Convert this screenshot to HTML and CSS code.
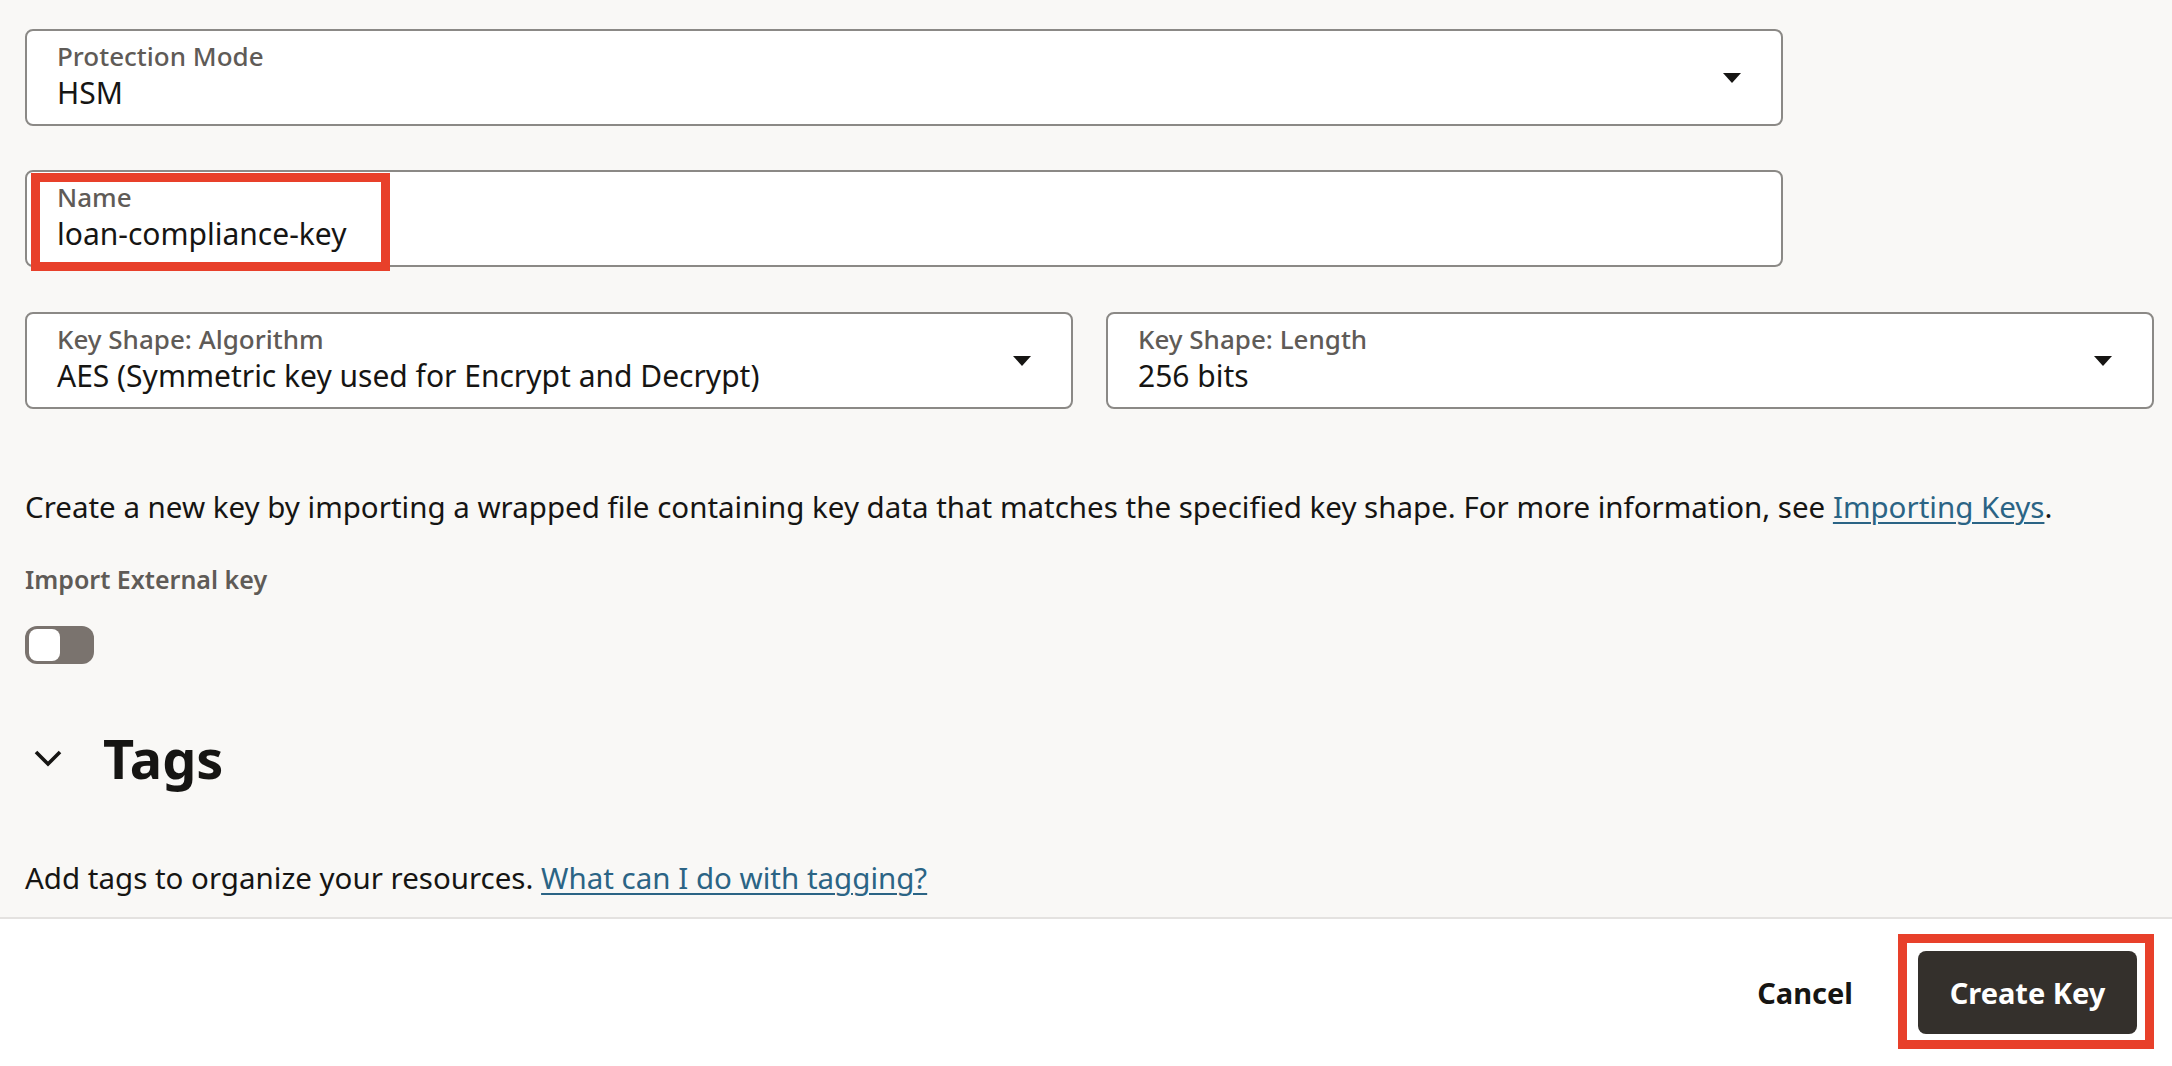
FILE: index.html
```html
<!DOCTYPE html>
<html lang="en">
<head>
<meta charset="utf-8">
<title>Create Key</title>
<link rel="stylesheet" href="styles.css">
</head>
<body>
<main class="form">
  <div class="field field-wide">
    <div class="field-text">
      <div class="field-label">Protection Mode</div>
      <div class="field-value">HSM</div>
    </div>
    <svg class="caret" viewBox="0 0 18 10" width="18" height="10"><path d="M0 0H18L9 10Z"/></svg>
  </div>

  <div class="field field-wide gap-top">
    <div class="field-text">
      <div class="field-label">Name</div>
      <div class="field-value">loan-compliance-key</div>
    </div>
  </div>

  <div class="row gap-top">
    <div class="field">
      <div class="field-text">
        <div class="field-label">Key Shape: Algorithm</div>
        <div class="field-value">AES (Symmetric key used for Encrypt and Decrypt)</div>
      </div>
      <svg class="caret" viewBox="0 0 18 10" width="18" height="10"><path d="M0 0H18L9 10Z"/></svg>
    </div>
    <div class="field">
      <div class="field-text">
        <div class="field-label">Key Shape: Length</div>
        <div class="field-value">256 bits</div>
      </div>
      <svg class="caret" viewBox="0 0 18 10" width="18" height="10"><path d="M0 0H18L9 10Z"/></svg>
    </div>
  </div>

  <p class="desc">Create a new key by importing a wrapped file containing key data that matches the specified key shape. For more information, see <a href="#">Importing Keys</a>.</p>

  <div class="switch-label">Import External key</div>
  <div class="switch"><span class="thumb"></span></div>

  <div class="section-head">
    <svg class="chevron" viewBox="0 0 28 17" width="28" height="17"><path d="M2 2L14 14L26 2" fill="none" stroke="#161513" stroke-width="3.6"/></svg>
    <h2>Tags</h2>
  </div>

  <p class="tags-desc">Add tags to organize your resources. <a href="#">What can I do with tagging?</a></p>
</main>

<footer class="footer">
  <button class="btn-cancel">Cancel</button>
  <button class="btn-primary">Create Key</button>
</footer>

<div class="highlight highlight-name"></div>
<div class="highlight highlight-button"></div>
</body>
</html>
```

FILE: styles.css
```css
* { box-sizing: border-box; }

html, body {
  margin: 0;
  height: 100%;
}

body {
  display: flex;
  flex-direction: column;
  height: 1066px;
  background: #f9f8f6;
  font-family: "Noto Sans", "Open Sans", sans-serif;
  color: #161513;
  position: relative;
  overflow: hidden;
}

.form {
  flex: 1;
  padding: 29px 18px 0 25px;
}

.field {
  height: 97px;
  border: 2px solid #8b8986;
  border-radius: 8px;
  background: #ffffff;
  display: flex;
  align-items: center;
  padding: 0 40px 0 30px;
}

.field-wide {
  width: 1758px;
}

.gap-top {
  margin-top: 44px;
}

.row {
  display: grid;
  grid-template-columns: 1fr 1fr;
  column-gap: 33px;
}

.row.gap-top { margin-top: 45px; }

.field-text {
  flex: 1;
  align-self: flex-start;
  padding-top: 7px;
}

.field-label {
  font-size: 26px;
  line-height: 36px;
  font-weight: 500;
  color: #5f5b57;
}

.field-value {
  margin-top: -1px;
  font-size: 30px;
  line-height: 40px;
  color: #161513;
}

.caret {
  fill: #161513;
  flex: none;
}

.desc {
  margin: 78px 0 0;
  font-size: 29.5px;
  line-height: 40px;
}

a {
  color: #2b6485;
  text-decoration: underline;
  text-underline-offset: 4px;
  text-decoration-thickness: 2px;
}

.switch-label {
  margin-top: 34px;
  font-size: 25px;
  line-height: 36px;
  font-weight: 600;
  color: #5f5b57;
}

.switch {
  margin-top: 29px;
  width: 69px;
  height: 38px;
  border-radius: 12px;
  background: #7a736e;
  padding: 3px 4px;
}

.thumb {
  display: block;
  width: 31px;
  height: 32px;
  border-radius: 8px;
  background: #ffffff;
}

.section-head {
  margin-top: 54px;
  height: 80px;
  display: flex;
  align-items: center;
}

.chevron {
  margin-left: 9px;
  flex: none;
}

.section-head h2 {
  margin: 0 0 0 41px;
  font-size: 54px;
  line-height: 80px;
  font-weight: 700;
}

.tags-desc {
  margin: 60px 0 0;
  font-size: 29.5px;
  line-height: 40px;
}

.footer {
  flex: none;
  height: 149px;
  border-top: 2px solid #e4e2e0;
  background: #ffffff;
  display: flex;
  align-items: center;
  justify-content: flex-end;
  padding-right: 35px;
  gap: 65px;
}

button {
  font-family: inherit;
  border: none;
  cursor: pointer;
}

.btn-cancel {
  background: none;
  font-size: 29px;
  font-weight: 700;
  color: #161513;
  padding: 0;
}

.btn-primary {
  width: 219px;
  height: 83px;
  border-radius: 8px;
  background: #34302c;
  color: #ffffff;
  font-size: 29px;
  font-weight: 700;
}

.highlight {
  position: absolute;
  border: 9px solid #e8402a;
  pointer-events: none;
}

.highlight-name {
  left: 31px;
  top: 173px;
  width: 359px;
  height: 98px;
}

.highlight-button {
  left: 1898px;
  top: 934px;
  width: 256px;
  height: 115px;
}
```
